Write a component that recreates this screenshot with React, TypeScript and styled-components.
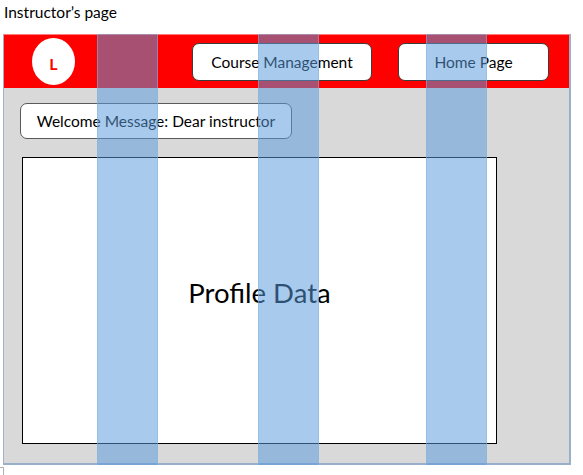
import React from "react";
import styled, { createGlobalStyle } from "styled-components";

const GlobalStyle = createGlobalStyle`
  html, body {
    margin: 0;
    padding: 0;
    background: #ffffff;
  }
  body {
    font-family: Lato, "Open Sans", "Liberation Sans", sans-serif;
    color: #000000;
  }
  * { box-sizing: border-box; }
`;

const Page = styled.div`
  width: 583px;
  height: 475px;
  overflow: hidden;
  position: relative;
`;

const Title = styled.div`
  height: 34px;
  padding: 3px 0 0 4px;
  font-size: 15.5px;
  line-height: 18px;
`;

const Frame = styled.div`
  position: relative;
  margin-left: 3px;
  width: 568px;
  height: 431px;
  display: flex;
  flex-direction: column;
  border-top: 1px solid #ff7b7b;
  border-left: 1px solid #9db3cc;
  border-right: 2px solid #98b0cc;
  border-bottom: 2px solid #98b0cc;
`;

const Header = styled.div`
  height: 53px;
  flex: none;
  background: #ff0000;
  display: flex;
  align-items: center;
`;

const Logo = styled.div`
  width: 43px;
  height: 47px;
  margin-left: 28px;
  border-radius: 50%;
  background: #ffffff;
  display: flex;
  align-items: center;
  justify-content: center;
  color: #ff0000;
  font-weight: 700;
  font-size: 16px;
  padding-top: 4px;
`;

const NavButton = styled.div<{ $width: number; $gap: number }>`
  width: ${(p) => p.$width}px;
  height: 38px;
  margin-left: ${(p) => p.$gap}px;
  margin-top: 1px;
  background: #ffffff;
  border: 1px solid #3c3c3c;
  border-radius: 7px;
  display: flex;
  align-items: center;
  justify-content: center;
  font-size: 15.5px;
`;

const Body = styled.div`
  flex: 1;
  background: #d9d9d9;
  padding: 15px 0 0 16px;
  display: flex;
  flex-direction: column;
`;

const Welcome = styled.div`
  width: 272px;
  height: 36px;
  background: #ffffff;
  border: 1px solid #5a5a5a;
  border-radius: 7px;
  display: flex;
  align-items: center;
  justify-content: center;
  font-size: 15.5px;
`;

const Profile = styled.div`
  margin: 18px 0 0 2px;
  width: 475px;
  height: 287px;
  background: #ffffff;
  border: 1px solid #000000;
  display: flex;
  align-items: center;
  justify-content: center;
  font-size: 27.5px;
  padding-bottom: 16px;
`;

const Column = styled.div<{ $left: number }>`
  position: absolute;
  top: -1px;
  bottom: -2px;
  left: ${(p) => p.$left}px;
  width: 61px;
  background: rgba(89, 154, 218, 0.52);
  box-shadow: inset 1px 0 0 rgba(140, 180, 220, 0.5), inset -1px 0 0 rgba(140, 180, 220, 0.5);
  pointer-events: none;
`;

const CornerMark = styled.div`
  margin-top: 2px;
  width: 4px;
  height: 9px;
  border-top: 1px solid #b0b0b0;
  border-right: 1px solid #b0b0b0;
`;

const columns = [93, 254, 422];

export default function App() {
  return (
    <Page>
      <GlobalStyle />
      <Title>Instructor’s page</Title>
      <Frame>
        <Header>
          <Logo>L</Logo>
          <NavButton $width={180} $gap={117}>Course Management</NavButton>
          <NavButton $width={151} $gap={26}>Home Page</NavButton>
        </Header>
        <Body>
          <Welcome>Welcome Message: Dear instructor</Welcome>
          <Profile>Profile Data</Profile>
        </Body>
        {columns.map((left) => (
          <Column key={left} $left={left} />
        ))}
      </Frame>
      <CornerMark />
    </Page>
  );
}
